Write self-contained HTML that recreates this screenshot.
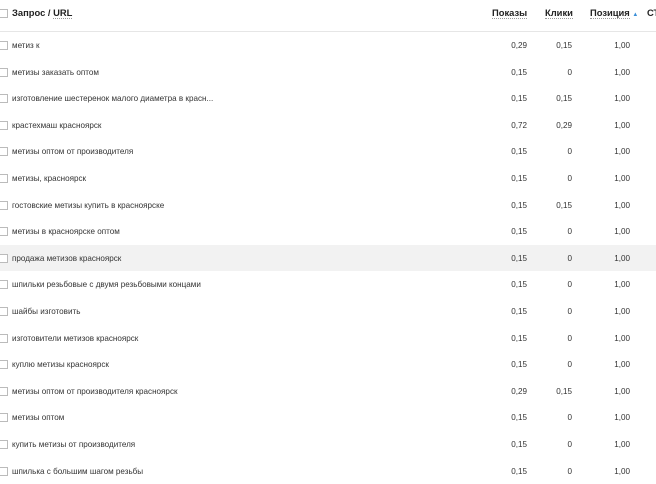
<!DOCTYPE html>
<html><head><meta charset="utf-8"><style>
body{margin:0;width:656px;height:480px;overflow:hidden;background:#fff;font-family:"Liberation Sans",Arial,sans-serif;position:relative}
.hd{position:absolute;top:0;left:0;width:656px;height:31px;border-bottom:1px solid #e6e6e6}
.h{position:absolute;top:7px;font-size:9.4px;font-weight:bold;color:#222}
.u{border-bottom:1px dotted #999}
.cb{position:absolute;left:-1px;width:7px;height:7px;border:1px solid #bbb;background:#fff}
.row{position:absolute;left:0;width:656px;height:26.6px}
.t{position:absolute;left:12px;top:9px;font-size:8.1px;color:#333;white-space:nowrap}
.n{position:absolute;top:9px;font-size:8.1px;color:#333;text-align:right;width:60px}
</style></head><body>
<div class="hd">
<div class="cb" style="top:9px"></div>
<div class="h" style="left:12px">Запрос / <span class="u">URL</span></div>
<div class="h" style="left:492px"><span class="u">Показы</span></div>
<div class="h" style="left:545px"><span class="u">Клики</span></div>
<div class="h" style="left:590px"><span class="u">Позиция</span> <span style="color:#3a8fd8;font-size:6px">▲</span></div>
<div class="h" style="left:647px">СТ</div>
</div>
<div id="rows"></div>
<script>
var d=[["метиз к","0,29","0,15"],["метизы заказать оптом","0,15","0"],["изготовление шестеренок малого диаметра в красн...","0,15","0,15"],["крастехмаш красноярск","0,72","0,29"],["метизы оптом от производителя","0,15","0"],["метизы, красноярск","0,15","0"],["гостовские метизы купить в красноярске","0,15","0,15"],["метизы в красноярске оптом","0,15","0"],["продажа метизов красноярск","0,15","0"],["шпильки резьбовые с двумя резьбовыми концами","0,15","0"],["шайбы изготовить","0,15","0"],["изготовители метизов красноярск","0,15","0"],["куплю метизы красноярск","0,15","0"],["метизы оптом от производителя красноярск","0,29","0,15"],["метизы оптом","0,15","0"],["купить метизы от производителя","0,15","0"],["шпилька с большим шагом резьбы","0,15","0"]];
var h="";
d.forEach(function(r,i){var y=32+i*26.6;
h+='<div class="row" style="top:'+y+'px;'+(i==8?'background:#f2f2f2;':'')+'"><div class="cb" style="top:9px"></div><div class="t">'+r[0]+'</div><div class="n" style="left:467px">'+r[1]+'</div><div class="n" style="left:512px">'+r[2]+'</div><div class="n" style="left:570px">1,00</div></div>';});
document.getElementById("rows").innerHTML=h;
</script>
</body></html>
